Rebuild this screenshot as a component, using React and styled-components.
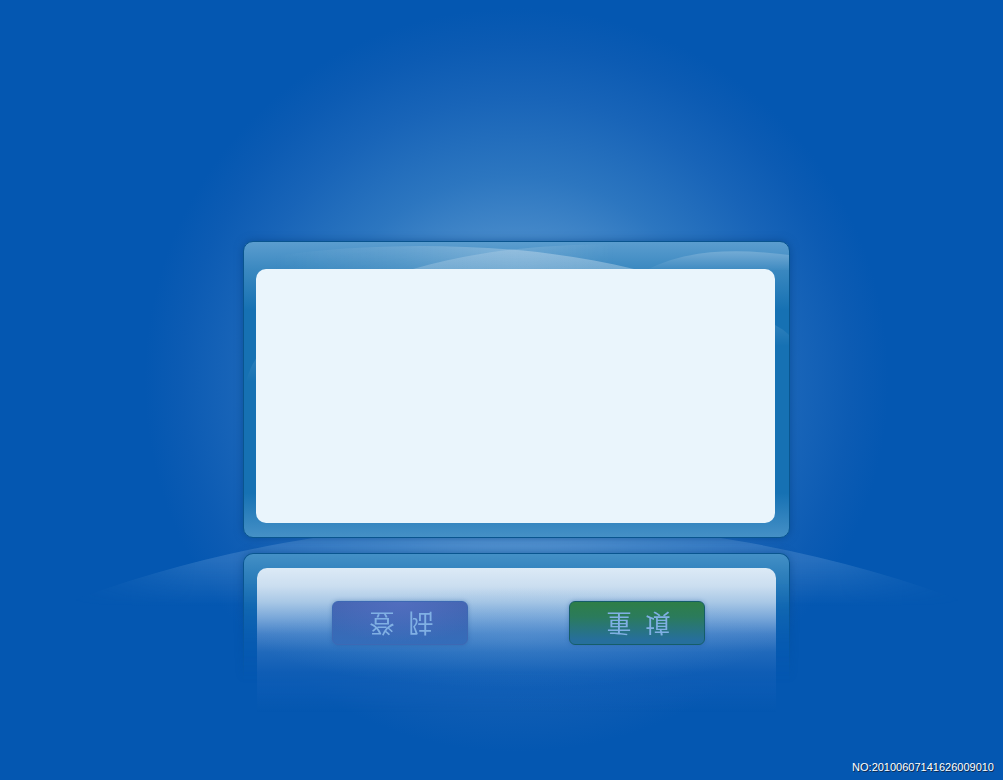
import React from 'react';
import styled, { createGlobalStyle } from 'styled-components';

const GlobalStyle = createGlobalStyle`
  * { box-sizing: border-box; }
  body { margin: 0; background: #0457b1; }
`;

const Page = styled.div`
  position: relative;
  display: flex;
  flex-direction: column;
  min-height: 100vh;
  overflow: hidden;
  background:
    radial-gradient(
      circle 372px at calc(50% + 15px) 380px,
      #589ad2 0%,
      #4488c9 39%,
      #2c76c0 55%,
      #1864b8 76%,
      #0c5bb3 90%,
      #0457b1 100%
    ),
    #0457b1;
  font-family: "Liberation Sans", "Noto Sans CJK SC", sans-serif;
`;

const Horizon = styled.svg`
  position: absolute;
  top: 522px;
  left: calc(50% - 445px);
  width: 920px;
  height: 90px;
  mask-image: linear-gradient(90deg, transparent 10px, #000 140px, #000 780px, transparent 910px);
`;

const Stage = styled.main`
  position: relative;
  display: flex;
  flex-direction: column;
  align-items: center;
  gap: 15px;
  padding: 241px 0 0 29px;
`;

const Frame = styled.section`
  position: relative;
  width: 100%;
  max-width: 547px;
  padding: 27px 14px 14px 12px;
  border: 1px solid #09558f;
  border-radius: 10px;
  overflow: hidden;
  background: linear-gradient(
    #5b9dcf 0,
    #3a88c0 28px,
    #1671b3 68px,
    #1671b3 calc(100% - 44px),
    #4590c6 100%
  );
`;

const Halo = styled.div`
  display: flex;
  justify-content: center;
  width: 100%;
  max-width: 547px;
  border-radius: 10px;
  box-shadow: 0 0 8px rgba(0, 64, 130, 0.6);
`;

const Waves = styled.svg`
  position: absolute;
  top: 0;
  left: 0;
  width: 545px;
  height: 140px;
`;

const Sheet = styled.div`
  position: relative;
  height: 254px;
  border-radius: 10px;
  background: #eaf5fc;
`;

const Reflection = styled.section`
  position: relative;
  width: 100%;
  max-width: 547px;
  padding: 15px 14px 0;
`;

const FadingFrame = styled.div`
  position: absolute;
  inset: -10px -10px 0;
  padding: 10px 10px 0;
  overflow: hidden;
  mask-image: linear-gradient(#000 40px, transparent 140px);

  &::before {
    content: "";
    display: block;
    height: 100%;
    border: 1px solid #09558f;
    border-bottom: 0;
    border-radius: 10px 10px 0 0;
    background: linear-gradient(#4490c6 0, #2f80bc 20px, #136bb1 54px, #0457b1 120px);
    box-shadow: 0 0 8px rgba(0, 64, 130, 0.5);
  }
`;

const ReflectedSheet = styled.div`
  position: relative;
  display: flex;
  justify-content: space-between;
  align-items: flex-start;
  height: 144px;
  padding: 33px 71px 0 75px;
  border-radius: 10px 10px 0 0;
  background:
    radial-gradient(
      ellipse 260px 50px at 50% 70px,
      rgba(110, 164, 218, 0.3),
      rgba(70, 136, 205, 0)
    ),
    linear-gradient(
      #dceaf6 0,
      #cbdef0 18px,
      #a9c8e6 34px,
      #79a7d9 50px,
      #4582c8 66px,
      #2069bb 84px,
      #0f5db5 104px,
      rgba(4, 87, 177, 0) 144px
    );
`;

const tones = {
  violet: {
    fill: 'radial-gradient(ellipse 90px 40px at 50% 0, rgba(92, 116, 200, 0.6), rgba(92, 116, 200, 0)), linear-gradient(#4263af, #346dba)',
    edge: '#3d68b4',
  },
  green: {
    fill: 'linear-gradient(#2e7e47 0, #2b7b5c 35%, #266f9c 90%)',
    edge: '#155d68',
  },
};

const PanelButton = styled.button`
  display: flex;
  justify-content: center;
  align-items: center;
  width: 136px;
  height: 44px;
  padding: 0 0 0 4px;
  border: 1px solid ${({ $tone }) => tones[$tone].edge};
  border-radius: 6px;
  background: ${({ $tone }) => tones[$tone].fill};
  box-shadow: 0 0 4px rgba(30, 80, 150, 0.4);
  color: #80b0e4;
  font-family: inherit;
  font-size: 25px;
  line-height: 32px;
  cursor: pointer;
`;

const MirroredLabel = styled.span`
  white-space: pre;
  transform: scaleY(-1);
`;

const Footer = styled.footer`
  position: relative;
  margin-top: auto;
  padding: 0 9px 6px;
  color: #fff;
  font-size: 11px;
  line-height: 14px;
  text-align: right;
  text-shadow: 1px 1px 0 #12294a;
`;

export default function App() {
  return (
    <Page>
      <GlobalStyle />
      <Horizon viewBox="0 0 920 90" aria-hidden="true">
        <defs>
          <linearGradient id="floorFade" x1="0" y1="0" x2="0" y2="1">
            <stop offset="0" stopColor="#8fbdea" stopOpacity="0.28" />
            <stop offset="0.45" stopColor="#8fbdea" stopOpacity="0.22" />
            <stop offset="1" stopColor="#8fbdea" stopOpacity="0" />
          </linearGradient>
        </defs>
        <path d="M0 84 A1300 1300 0 0 1 920 84 Z" fill="url(#floorFade)" />
      </Horizon>
      <Stage>
        <Halo>
          <Frame aria-label="登陆">
            <Waves viewBox="0 0 545 140" aria-hidden="true">
              <defs>
                <linearGradient id="broad" x1="0" y1="0" x2="1" y2="0">
                  <stop offset="0" stopColor="#fff" stopOpacity="0" />
                  <stop offset="0.36" stopColor="#fff" stopOpacity="0.12" />
                  <stop offset="0.7" stopColor="#fff" stopOpacity="0.3" />
                  <stop offset="1" stopColor="#fff" stopOpacity="0.36" />
                </linearGradient>
                <linearGradient id="middle" x1="0" y1="0" x2="1" y2="0">
                  <stop offset="0" stopColor="#fff" stopOpacity="0.26" />
                  <stop offset="0.4" stopColor="#fff" stopOpacity="0.16" />
                  <stop offset="0.8" stopColor="#fff" stopOpacity="0" />
                </linearGradient>
                <linearGradient id="right" x1="0" y1="0" x2="0" y2="1">
                  <stop offset="0" stopColor="#fff" stopOpacity="0.2" />
                  <stop offset="1" stopColor="#fff" stopOpacity="0.02" />
                </linearGradient>
                <linearGradient id="streak" x1="0" y1="0" x2="0" y2="1">
                  <stop offset="0" stopColor="#fff" stopOpacity="0.1" />
                  <stop offset="1" stopColor="#fff" stopOpacity="0" />
                </linearGradient>
                <linearGradient id="broadFade" x1="0" y1="0" x2="0" y2="1">
                  <stop offset="0" stopColor="#fff" />
                  <stop offset="1" stopColor="#ccc" />
                </linearGradient>
                <mask id="soft">
                  <rect width="545" height="28" fill="url(#broadFade)" />
                </mask>
              </defs>
              <g mask="url(#soft)">
                <path d="M30 14 C140 -2 280 0 390 27 L30 27 Z" fill="url(#broad)" />
                <path d="M169 27 C240 7 310 0 420 3 L420 27 Z" fill="url(#middle)" />
              </g>
              <path d="M403 28 C440 8 490 6 545 13 L545 28 Z" fill="url(#right)" />
              <path d="M2 140 Q6 124 14 114 L14 140 Z" fill="url(#streak)" />
              <path d="M531 83 Q539 87 545 93 L545 104 L531 104 Z" fill="url(#streak)" />
            </Waves>
            <Sheet />
          </Frame>
        </Halo>
        <Reflection>
          <FadingFrame />
          <ReflectedSheet>
            <PanelButton type="button" $tone="violet">
              <MirroredLabel>登  陆</MirroredLabel>
            </PanelButton>
            <PanelButton type="button" $tone="green">
              <MirroredLabel>重  填</MirroredLabel>
            </PanelButton>
          </ReflectedSheet>
        </Reflection>
      </Stage>
      <Footer>NO:20100607141626009010</Footer>
    </Page>
  );
}
